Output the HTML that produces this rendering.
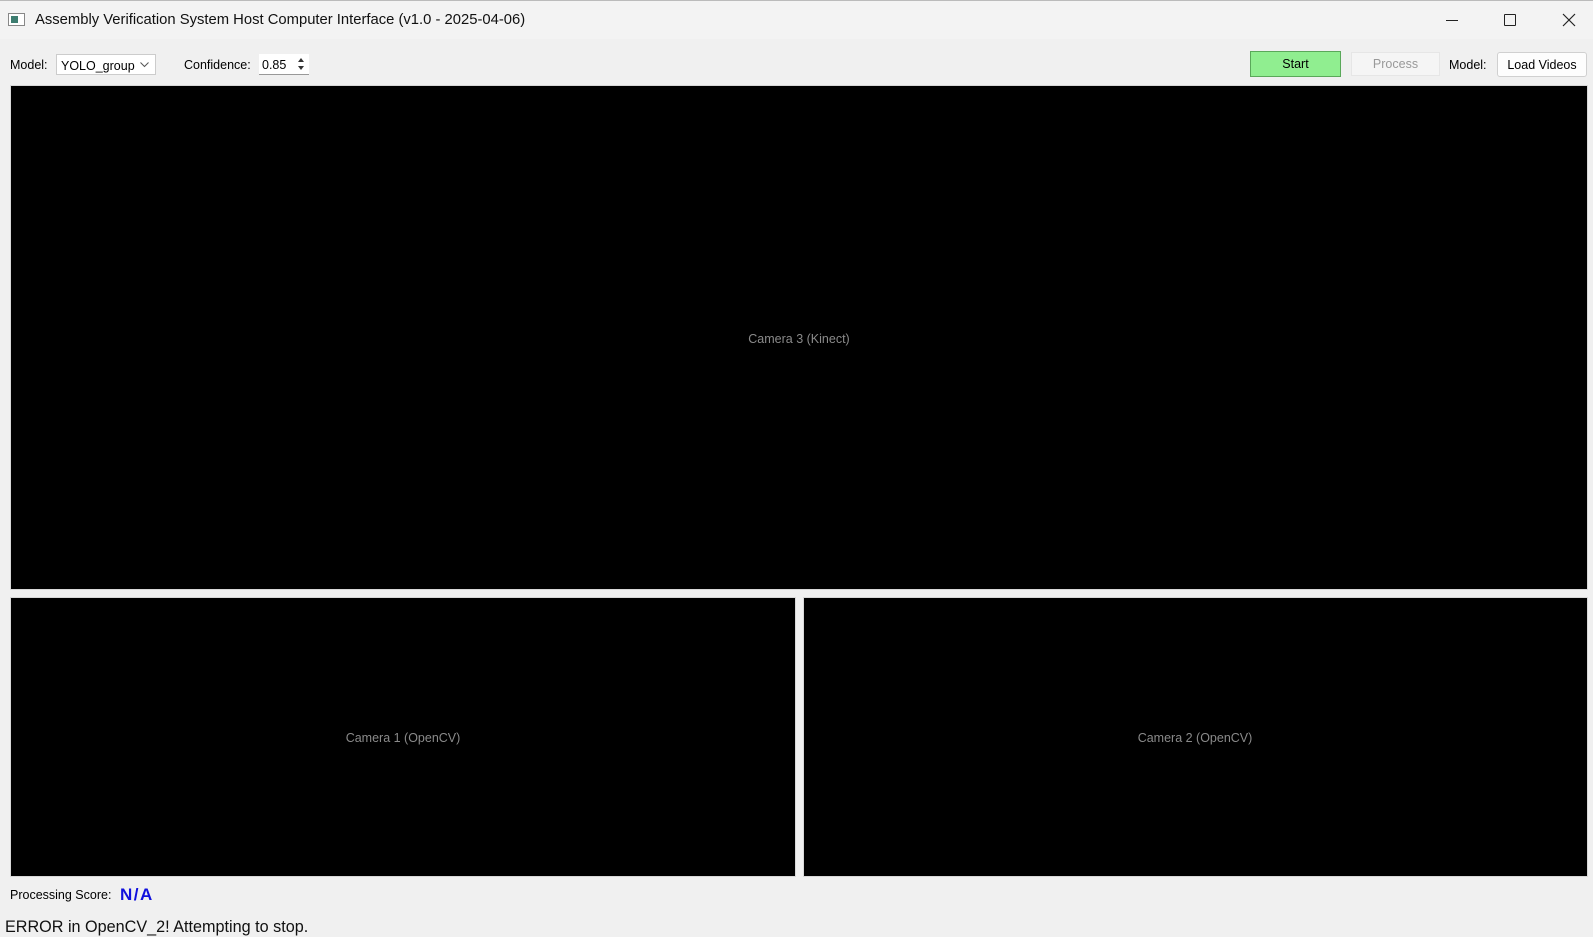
<!DOCTYPE html>
<html><head><meta charset="utf-8"><style>
*{margin:0;padding:0;box-sizing:border-box}
body{width:1593px;height:934px;background:#f0f0f0;font-family:"Liberation Sans",sans-serif;position:relative;overflow:hidden;color:#000}
.a{position:absolute}
.t{font-size:12.5px}
.blk{position:absolute;background:#000;border:1px solid #d8d8d8}
.cap{position:absolute;color:#8a8a8a;font-size:12.5px;transform:translate(-50%,-50%);white-space:nowrap}
</style></head><body>
<div class="a" style="left:0;top:0;width:1593px;height:39px;background:#f3f3f3;border-top:1px solid #bbb"></div>
<div class="a" style="left:8px;top:13px;width:17px;height:13px;border:1px solid #888;background:#fff"><div style="position:absolute;left:2px;top:2px;width:7px;height:7px;background:#3d7d70"></div></div>
<div class="a" style="left:35px;top:12px;font-size:14.8px;color:#111">Assembly Verification System Host Computer Interface (v1.0 - 2025-04-06)</div>
<div class="a" style="left:1446px;top:20px;width:12px;height:1px;background:#222"></div>
<div class="a" style="left:1504px;top:14px;width:12px;height:12px;border:1px solid #222;border-radius:1px"></div>
<svg class="a" style="left:1562px;top:13px" width="14" height="14"><path d="M1 1L13 13M13 1L1 13" stroke="#222" stroke-width="1.2"/></svg>

<div class="a t" style="left:10px;top:58px">Model:</div>
<div class="a t" style="left:56px;top:54px;width:100px;height:21px;background:#fff;border:1px solid #ccc;padding:4px 4px">YOLO_group<svg style="position:absolute;right:6px;top:7px" width="9" height="6"><path d="M0.5 0.5L4.5 4.5L8.5 0.5" stroke="#555" fill="none"/></svg></div>
<div class="a t" style="left:184px;top:58px">Confidence:</div>
<div class="a t" style="left:259px;top:54px;width:50px;height:21px;background:#fff;border-bottom:1px solid #999;padding:4px 3px">0.85
<svg style="position:absolute;right:3px;top:2px" width="10" height="16"><path d="M2 6L5 2L8 6Z M2 10L5 14L8 10Z" fill="#333"/></svg></div>

<div class="a t" style="left:1250px;top:51px;width:91px;height:26px;background:#90ee90;border:1px solid #5aa85a;text-align:center;line-height:25px">Start</div>
<div class="a t" style="left:1351px;top:52px;width:89px;height:24px;background:#f5f5f5;border:1px solid #e6e6e6;text-align:center;line-height:23px;color:#999">Process</div>
<div class="a t" style="left:1449px;top:58px">Model:</div>
<div class="a t" style="left:1497px;top:52px;width:90px;height:25px;background:#fdfdfd;border:1px solid #d0d0d0;border-radius:3px;text-align:center;line-height:24px">Load Videos</div>

<div class="blk" style="left:10px;top:85px;width:1578px;height:505px"></div>
<div class="cap" style="left:799px;top:339px">Camera 3 (Kinect)</div>
<div class="blk" style="left:10px;top:597px;width:786px;height:280px"></div>
<div class="cap" style="left:403px;top:738px">Camera 1 (OpenCV)</div>
<div class="blk" style="left:803px;top:597px;width:785px;height:280px"></div>
<div class="cap" style="left:1195px;top:738px">Camera 2 (OpenCV)</div>

<div class="a t" style="left:10px;top:888px">Processing Score:</div>
<div class="a" style="left:120px;top:885px;font-size:17px;font-weight:bold;color:#1010dd;letter-spacing:1.5px">N/A</div>
<div class="a" style="left:5px;top:918px;font-size:16.2px;color:#111">ERROR in OpenCV_2! Attempting to stop.</div>
</body></html>
